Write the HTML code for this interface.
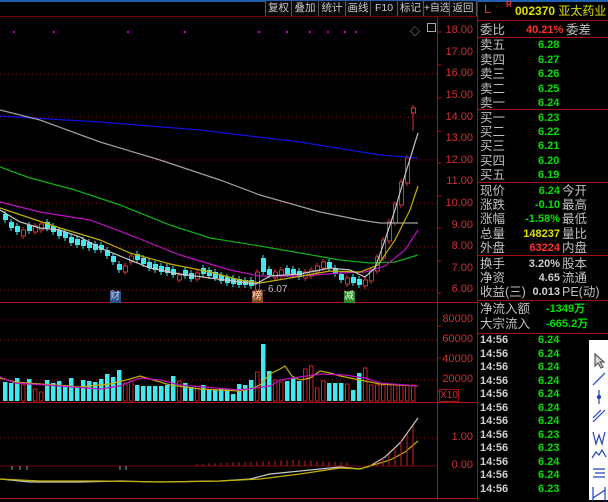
<!DOCTYPE html>
<html><head><meta charset="utf-8"><style>
*{margin:0;padding:0;box-sizing:border-box}
body{width:608px;height:500px;background:#000;overflow:hidden;position:relative;font-family:"Liberation Sans","Noto Sans CJK SC",sans-serif}
.tb{position:absolute;top:1px;height:16px;border:1px solid #555;border-top:none;color:#c8c8c8;font-size:10.5px;line-height:15px;text-align:center;background:#0a0a0a;white-space:nowrap;overflow:hidden}
.rp{position:absolute;left:477px;top:0;width:131px;height:500px;border-left:1px solid #a01010}
.r{position:absolute;left:2px;font-size:12.5px;line-height:14px;color:#c0c0c0;white-space:nowrap}
.v{position:absolute;font-size:11px;line-height:14px;font-weight:bold;white-space:nowrap;text-align:right}
.g{color:#00e000}.rd{color:#ff3030}.y{color:#e0e000}.w{color:#d0d0d0}
.hl{position:absolute;left:0;width:131px;height:1px;background:#a01010}
.ax{position:absolute;font-size:11px;color:#d03030;text-align:right;width:40px;left:433px}
</style></head><body>
<div style="position:absolute;left:0;top:0;width:608px;height:2px;background:#1f5fb0"></div>
<div class="tb" style="left:265px;width:27px">复权</div>
<div class="tb" style="left:291px;width:28px">叠加</div>
<div class="tb" style="left:318px;width:28px">统计</div>
<div class="tb" style="left:345px;width:26px">画线</div>
<div class="tb" style="left:370px;width:28px">F10</div>
<div class="tb" style="left:397px;width:27px">标记</div>
<div class="tb" style="left:423px;width:27px;font-size:10px">+自选</div>
<div class="tb" style="left:449px;width:28px">返回</div>
<div style="position:absolute;left:0;top:16px;width:477px;height:1px;background:#700"></div>
<svg id="c" width="608" height="500" style="position:absolute;left:0;top:0"></svg>
<div class="ax" style="top:24px">18.00</div><div class="ax" style="top:46px">17.00</div><div class="ax" style="top:67px">16.00</div><div class="ax" style="top:89px">15.00</div><div class="ax" style="top:111px">14.00</div><div class="ax" style="top:132px">13.00</div><div class="ax" style="top:154px">12.00</div><div class="ax" style="top:175px">11.00</div><div class="ax" style="top:197px">10.00</div><div class="ax" style="top:219px">9.00</div><div class="ax" style="top:240px">8.00</div><div class="ax" style="top:262px">7.00</div><div class="ax" style="top:283px">6.00</div>
<div class="ax" style="top:313px">80000</div><div class="ax" style="top:333px">60000</div><div class="ax" style="top:353px">40000</div><div class="ax" style="top:373px">20000</div>
<div style="position:absolute;left:439px;top:389px;width:20px;height:13px;border:1px solid #a01010;color:#d03030;font-size:10px;line-height:11px;text-align:center">X10</div>
<div class="ax" style="top:431px">1.00</div><div class="ax" style="top:459px">0.00</div>
<div style="position:absolute;left:258px;top:284px;font-size:10px;color:#c0c0c0">←6.07</div>
<div style="position:absolute;left:110px;top:291px;width:11px;height:12px;background:#2a4f8a;color:#bcd;font-size:10px;line-height:12px">财</div>
<div style="position:absolute;left:252px;top:291px;width:11px;height:12px;background:#8a4a20;color:#fdc;font-size:10px;line-height:12px">榜</div>
<div style="position:absolute;left:344px;top:291px;width:11px;height:12px;background:#2a8a2a;color:#dfd;font-size:10px;line-height:12px">减</div>
<div style="position:absolute;left:410px;top:23px;color:#aaa;font-size:10px">◇</div>
<div style="position:absolute;left:427px;top:23px;width:9px;height:9px;border:1px solid #aaa"></div>
<div class="rp">
<div style="position:absolute;left:6px;top:2px;color:#ff3030;font-size:12px">L</div>
<div style="position:absolute;left:28px;top:0;color:#ff3030;font-size:8px;font-weight:bold">R</div>
<div style="position:absolute;left:37px;top:2px;color:#e0e000;font-size:12px;font-weight:bold;white-space:nowrap">002370 <span style="font-weight:normal">亚太药业</span></div>
<div class="hl" style="top:20px"></div>
<div class="r" style="top:23px">委比</div><div class="v rd" style="left:48px;top:23px">40.21%</div><div class="r" style="left:88px;top:23px">委差</div>
<div class="hl" style="top:37px"></div>
<div class="r" style="top:38px;line-height:14.5px">卖五<br>卖四<br>卖三<br>卖二<br>卖一</div>
<div class="v g" style="left:60px;top:38px;line-height:14.5px">6.28<br>6.27<br>6.26<br>6.25<br>6.24</div>
<div class="hl" style="top:109px"></div>
<div class="r" style="top:111px;line-height:14.2px">买一<br>买二<br>买三<br>买四<br>买五</div>
<div class="v g" style="left:60px;top:111px;line-height:14.2px">6.23<br>6.22<br>6.21<br>6.20<br>6.19</div>
<div class="hl" style="top:182px"></div>
<div class="r" style="top:184px;line-height:14.2px">现价<br>涨跌<br>涨幅<br>总量<br>外盘</div>
<div class="v" style="left:30px;width:52px;top:184px;line-height:14.2px"><span class="g">6.24</span><br><span class="g">-0.10</span><br><span class="g">-1.58%</span><br><span class="y">148237</span><br><span class="rd">63224</span></div>
<div class="r" style="left:84px;top:184px;line-height:14.2px">今开<br>最高<br>最低<br>量比<br>内盘</div>
<div class="hl" style="top:255px"></div>
<div class="r" style="top:257px;line-height:14.2px">换手<br>净资<br>收益(三)</div>
<div class="v w" style="left:30px;width:52px;top:257px;line-height:14.2px">3.20%<br>4.65<br>0.013</div>
<div class="r" style="left:84px;top:257px;line-height:14.2px">股本<br>流通<br>PE(动)</div>
<div class="hl" style="top:300px"></div>
<div class="r" style="top:302px;line-height:15px">净流入额<br>大宗流入</div>
<div class="v g" style="left:60px;width:71px;text-align:left;top:302px;line-height:15px;padding-left:8px">-1349万<br>-665.2万</div>
<div class="hl" style="top:333px"></div>
<div id="t" style="position:absolute;left:2px;top:334px;font-size:11px;line-height:13.5px;font-weight:bold;color:#d0d0d0"></div>
<div id="p" style="position:absolute;left:60px;top:334px;font-size:11px;line-height:13.5px;font-weight:bold;color:#00e000"></div>
<div style="position:absolute;left:111px;top:340px;width:20px;height:160px;background:#fff"></div>
<svg width="20" height="150" style="position:absolute;left:111px;top:352px" stroke="#2040c0" fill="none" stroke-width="1.2">
<path d="M6 2v12l3-3 3 5 2-1-3-5h4z" stroke="#555" fill="#ddd"/>
<path d="M4 33l12-12"/><path d="M10 38v14" /><circle cx="10" cy="45" r="1.5" fill="#2040c0"/>
<path d="M4 70l12-12M4 66l8-8"/><path d="M4 80l3 12 3-9 3 9 3-12"/>
<path d="M3 106l4-6 3 3 3-5 4 7"/><path d="M4 117h12M6 121h10M4 125h12"/>
<path d="M4 135v14M16 135v14M4 146l12-8"/>
</svg>
</div>
<script>
var s='',i;
function L(x1,y1,x2,y2,c,d){s+='<line x1="'+x1+'" y1="'+y1+'" x2="'+x2+'" y2="'+y2+'" stroke="'+c+'" stroke-width="1"'+(d?' stroke-dasharray="1 3"':'')+'/>';}
function P(pts,c){s+='<polyline points="'+pts+'" fill="none" stroke="'+c+'" stroke-width="1.2"/>';}
[74,117,160,203,247,290].forEach(function(y){L(0,y,437,y,'#801010',1)});
[320,340,360,380].forEach(function(y){L(0,y,437,y,'#801010',1)});
[438].forEach(function(y){L(0,y,437,y,'#801010',1)});
L(0,466,437,466,'#700',0);
L(437.5,17,437.5,500,'#b01010');L(0,302.5,477,302.5,'#b01010');L(0,402.5,477,402.5,'#b01010');L(0,498.5,477,498.5,'#b01010');
[32,65,98,131,163,196,228,261,293,326,358,391].forEach(function(y){L(437,y,441,y,'#b01010')});
[13,53,127,184,258,286,309,327,344,355].forEach(function(x){s+='<rect x="'+x+'" y="31" width="2" height="2" fill="#c000c0"/>'});
var c=[220,228,232,230,231,226,224,228,232,236,238,243,245,246,248,250,250,256,262,270,266,256,260,264,268,270,272,273,275,275,276,279,273,274,276,278,281,283,284,285,285,286,272,266,275,272,270,274,275,277,272,270,266,262,268,274,280,278,283,285,280,270,257,240,222,204,182,158,108];
var vy=[382,383,378,385,379,389,392,380,383,381,385,378,387,380,381,382,379,374,377,370,383,381,385,386,386,386,386,385,376,381,383,387,386,385,389,390,388,389,394,384,385,380,372,344,371,380,382,381,378,381,369,366,388,381,383,383,383,384,390,373,368,392,369,380,386,386,385,385,385];
var n=c.length;
for(i=0;i<n;i++){var x=3+i*6,cl=c[i],op;
 if(i==0)op=cl-6; else op=(cl>c[i-1])?cl-6:(cl<c[i-1]?cl+6:cl+(i%2?5:-5));
 if(i==42)op=290; if(i==43){op=258;cl=272;} if(i==68){op=113;}
 if(i>=61&&i<68)op=c[i-1]+1;
 var up=cl<op,t=Math.min(cl,op),b=Math.max(cl,op);if(b-t<2)b=t+2;
 var col=up?'#e03030':'#40e8f0';
 L(x+2,t-3,x+2,b+(i==68?18:3),col);
 if(up)s+='<rect x="'+(x+.5)+'" y="'+t+'" width="4" height="'+(b-t)+'" fill="#000" stroke="'+col+'"/>';
 else s+='<rect x="'+x+'" y="'+t+'" width="5" height="'+(b-t)+'" fill="'+col+'"/>';
 var vt=i>=61?385:vy[i];
 if(up)s+='<rect x="'+(x+.5)+'" y="'+vt+'" width="3.5" height="'+(401-vt)+'" fill="#000" stroke="#d02020"/>';
 else s+='<rect x="'+x+'" y="'+vt+'" width="4.5" height="'+(401-vt)+'" fill="#40e8f0"/>';
}
P('0,116 100,122 200,130 300,142 380,155 418,158','#1010e0');
P('0,110 40,120 100,142 160,160 220,180 260,195 320,212 360,220 380,223 418,223','#a0a0a0');
P('0,167 30,178 75,190 120,205 170,225 210,238 260,246 300,253 340,260 370,263 395,262 418,255','#10b010');
P('0,202 40,212 90,220 130,235 180,255 230,270 260,276 300,276 340,273 365,272 385,266 405,250 418,230','#c010c0');
P('0,208 30,218 60,228 100,240 130,253 170,264 210,272 240,280 260,283 290,278 330,271 360,272 378,265 395,240 410,210 418,186','#c0b000');
P('0,210 20,222 40,228 60,230 80,237 100,248 125,258 150,268 180,274 210,278 240,282 256,284 270,276 300,274 330,268 350,270 365,277 375,268 385,240 395,210 405,175 418,133','#c8c8c8');
P('0,378 15,382 40,384 80,387 110,384 130,379 140,376 170,385 200,389 240,391 250,389 260,385 270,374 280,369 285,366 292,376 300,380 310,378 320,371 330,373 340,376 360,380 380,384 418,386','#c0b000');
P('0,377 15,383 60,386 100,389 120,386 140,378 160,380 180,385 240,390 270,386 280,380 300,377 320,374 345,375 365,378 380,383 418,386','#c010c0');
P('0,479 30,482 80,482 120,481 160,482 220,481 250,479 270,474 300,471 320,469 340,467 360,469 370,466 385,457 400,443 418,418','#c8c8c8');
P('0,479 40,481 100,481 160,482 220,481 260,479 300,474 340,468 360,469 370,466 390,460 405,452 418,441','#c0b000');
for(i=0;i<n;i++){var x=3+i*6,h=0;
 if(i>=32&&i<58)h=Math.max(0,5-Math.abs(i-48)/4)+1; if(i>=61)h=[2,4,8,12,18,25,32,40][i-61];
 if(h>0)L(x+2,466,x+2,466-h,'#d02020');}
[12,20,27,120,126].forEach(function(x){L(x,466,x,470,'#40c0c0')});
document.getElementById('c').innerHTML=s;
var pr=['6.24','6.24','6.24','6.24','6.24','6.24','6.24','6.23','6.23','6.24','6.24','6.23'],tt='',pp='';
for(i=0;i<12;i++){tt+='14:56<br>';pp+=pr[i]+'<br>';}
document.getElementById('t').innerHTML=tt;document.getElementById('p').innerHTML=pp;
</script>
</body></html>
